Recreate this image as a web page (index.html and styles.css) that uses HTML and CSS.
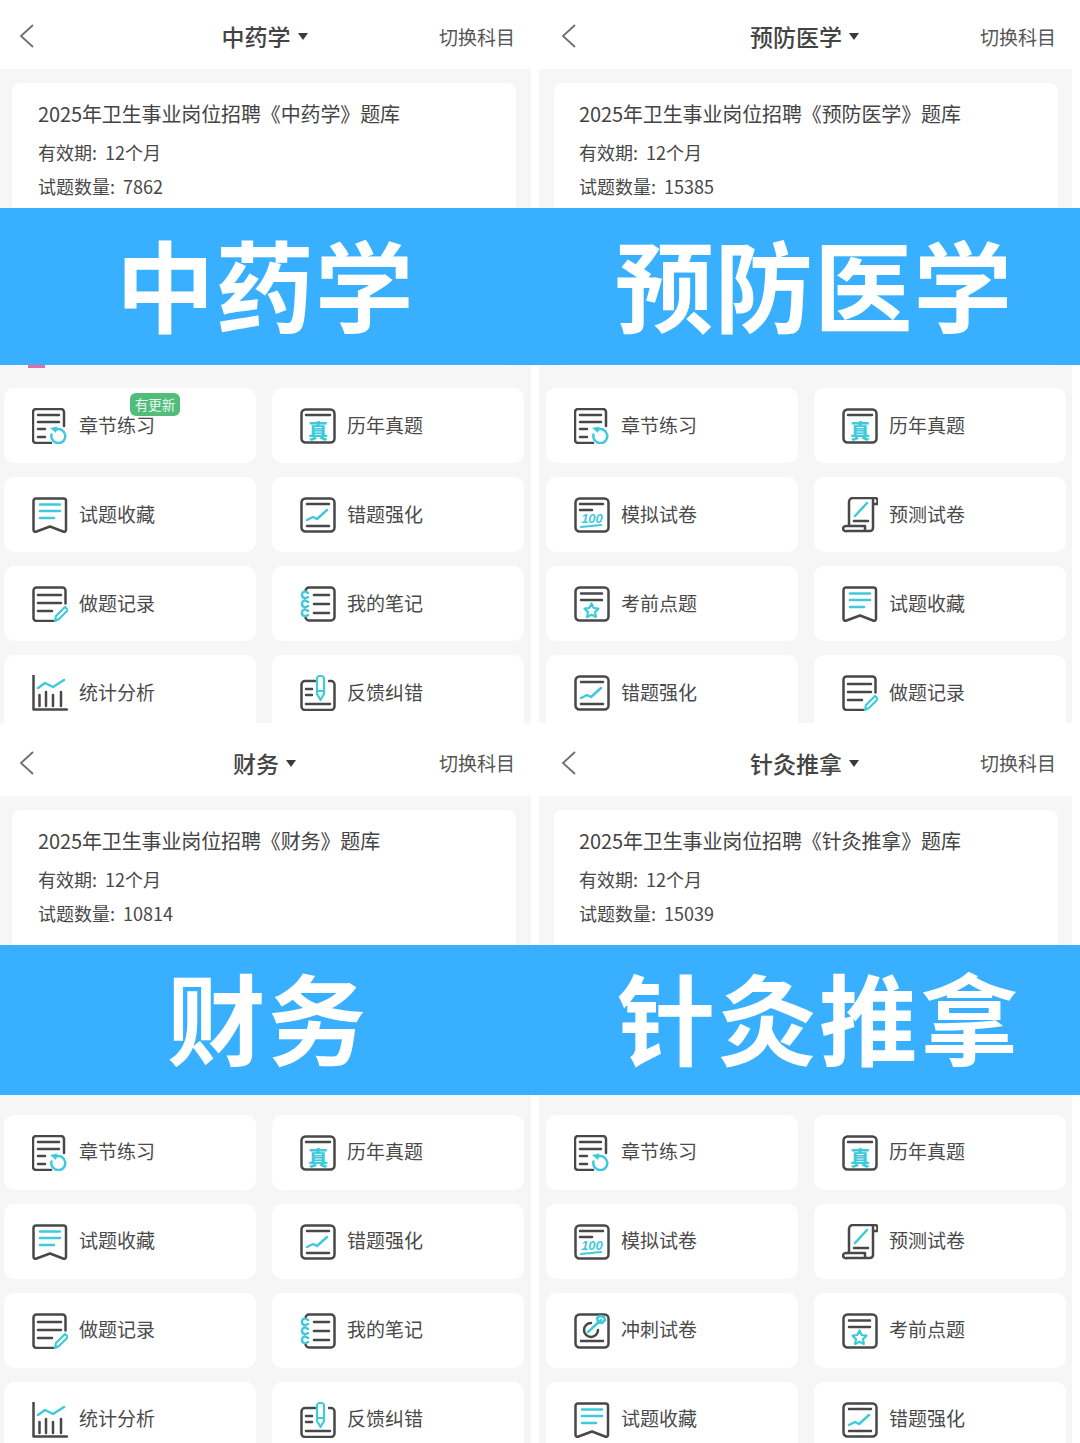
FILE: index.html
```html
<!DOCTYPE html>
<html lang="zh-CN">

<head>
    <meta charset="UTF-8">
    <meta name="viewport" content="width=device-width, initial-scale=1.0">
    <title>题库科目</title>
    <link rel="stylesheet" href="styles.css">
</head>

<body>
    <svg class="icon-defs" aria-hidden="true">
        <symbol id="i-chapter" viewBox="0 0 36 36">
            <path class="dk" d="M19 35H4a3 3 0 0 1-3-3V4a3 3 0 0 1 3-3h25a3 3 0 0 1 3 3v14"/>
            <path class="dk" d="M6 7h21M6 14h21M6 21h7M6 29h7"/>
            <path class="ac" d="M24 21.500a7 7 0 1 1-4.500 5"/>
            <path class="ac-fill" d="M18 20l7.500-1.500-1.500 6.500z"/>
        </symbol>
        <symbol id="i-fav" viewBox="0 0 36 36">
            <path class="dk" d="M4 1.500h27.500a2.500 2.500 0 0 1 2.500 2.500v29c0 1.500-1.500 2.200-3 1.500L18 29.500 4.500 34.500C3 35.200 1.500 34.500 1.500 33V4A2.500 2.500 0 0 1 4 1.500z"/>
            <path class="ac" d="M8 7.500h20M8 14h20M8 21h14"/>
        </symbol>
        <symbol id="i-record" viewBox="0 0 36 36">
            <path class="dk" d="M21 35H4.500a3 3 0 0 1-3-3V4.500a3 3 0 0 1 3-3h26a3 3 0 0 1 3 3v13"/>
            <path class="dk" d="M6 9h23M6 17h23M6 25h14"/>
            <path class="ac thin" d="M23 35l1-5 9-9 3 3-9 9z"/>
        </symbol>
        <symbol id="i-stats" viewBox="0 0 36 36">
            <path class="dk" d="M1.500 0v34.500H35M7.500 20v11M14 17v14M21 20v11M29 17v14"/>
            <path class="ac" d="M6 13l7-5 8 4 11-7"/>
        </symbol>
        <symbol id="i-real" viewBox="0 0 36 36">
            <rect class="dk" x="1.500" y="1.500" width="33" height="33" rx="4"/>
            <path class="dk" d="M6 7h24"/>
            <text class="glyph" x="18" y="31" text-anchor="middle">真</text>
        </symbol>
        <symbol id="i-wrong" viewBox="0 0 36 36">
            <rect class="dk" x="1.500" y="1.500" width="33" height="33" rx="4"/>
            <path class="dk" d="M7 7h22M7 29h22"/>
            <path class="ac" d="M7 23l6-3 4 2 10-9"/>
        </symbol>
        <symbol id="i-notes" viewBox="0 0 36 36">
            <path class="dk" d="M5.500 5a3.500 3.500 0 0 1 3.500-3.500h22a3.500 3.500 0 0 1 3.500 3.500v26a3.500 3.500 0 0 1-3.500 3.500H9A3.500 3.500 0 0 1 5.500 31"/>
            <path class="dk" d="M14 9h15M14 18h15M14 27h15"/>
            <path class="ac" d="M8 7C4 4 2 6 2 9s3 4 6 2M8 16c-4-3-6-1-6 2s3 4 6 2M8 25c-4-3-6-1-6 2s3 4 6 2"/>
        </symbol>
        <symbol id="i-feedback" viewBox="0 0 36 36">
            <path class="dk" d="M15 6H5a3.500 3.500 0 0 0-3.500 3.500v22A3.500 3.500 0 0 0 5 35h26a3.500 3.500 0 0 0 3.500-3.500v-22A3.500 3.500 0 0 0 31 6h-2"/>
            <path class="dk" d="M6 14h6M6 20h6M6 29h24"/>
            <path class="ac thin" d="M17 3a3 3 0 0 1 3-2h1a3 3 0 0 1 3 2v16l-3.500 6-3.500-6zM17 16h7"/>
        </symbol>
        <symbol id="i-mock" viewBox="0 0 36 36">
            <rect class="dk" x="1.500" y="1.500" width="33" height="33" rx="4"/>
            <path class="dk" d="M6 7h23M6 13h12"/>
            <text class="glyph-num" x="18" y="26" text-anchor="middle">100</text>
            <path class="ac thin" d="M7 30l20-2"/>
        </symbol>
        <symbol id="i-predict" viewBox="0 0 36 36">
            <path class="dk" d="M7 28V5a4 4 0 0 1 4-4h22a2.500 2.500 0 0 1 2.500 2.500V7H31M31 1.500V31a3 3 0 0 1-3 3H5a3 3 0 0 1-4-2.500A3 3 0 0 1 4 29h19v5"/>
            <path class="dk" d="M12 24h14"/>
            <path class="ac" d="M13 19L25 6"/>
        </symbol>
        <symbol id="i-key" viewBox="0 0 36 36">
            <rect class="dk" x="1.500" y="1.500" width="33" height="33" rx="4"/>
            <path class="dk" d="M7 7.500h21M7 14h21"/>
            <path class="ac thin" d="M17.500 17.500l2.200 4.500 4.800.700-3.500 3.400.900 4.900-4.400-2.300-4.400 2.300.900-4.900-3.500-3.400 4.800-.700z"/>
        </symbol>
        <symbol id="i-sprint" viewBox="0 0 36 36">
            <rect class="dk" x="1.500" y="1.500" width="33" height="33" rx="4"/>
            <path class="dk" d="M7 28h22M17 10a7 7 0 1 0 7 7"/>
            <path class="ac" d="M14 19L27 7M23 5l1 4 4 1 3-3-1-3-4-1z"/>
        </symbol>
    </svg>

    <div class="sheet">
        <section class="panel panel-top">
            <header class="topbar">
                <svg class="back" viewBox="0 0 16 24"><path d="M14 1L2 12l12 11"/></svg>
                <div class="subject">中药学<i class="caret"></i></div>
                <a class="switch">切换科目</a>
            </header>
            <div class="content">
                <div class="info-card">
                    <h2>2025年卫生事业岗位招聘《中药学》题库</h2>
                    <p>有效期: 12个月</p>
                    <p>试题数量: 7862</p>
                    <div class="promo-edge"></div>
                </div>
                <div class="tiles">
                    <div class="tile"><svg class="ico"><use href="#i-chapter"/></svg><span>章节练习</span><em class="badge">有更新</em></div>
                    <div class="tile"><svg class="ico"><use href="#i-real"/></svg><span>历年真题</span></div>
                    <div class="tile"><svg class="ico"><use href="#i-fav"/></svg><span>试题收藏</span></div>
                    <div class="tile"><svg class="ico"><use href="#i-wrong"/></svg><span>错题强化</span></div>
                    <div class="tile"><svg class="ico"><use href="#i-record"/></svg><span>做题记录</span></div>
                    <div class="tile"><svg class="ico"><use href="#i-notes"/></svg><span>我的笔记</span></div>
                    <div class="tile"><svg class="ico"><use href="#i-stats"/></svg><span>统计分析</span></div>
                    <div class="tile"><svg class="ico"><use href="#i-feedback"/></svg><span>反馈纠错</span></div>
                </div>
            </div>
        </section>

        <section class="panel panel-top panel-right">
            <header class="topbar">
                <svg class="back" viewBox="0 0 16 24"><path d="M14 1L2 12l12 11"/></svg>
                <div class="subject">预防医学<i class="caret"></i></div>
                <a class="switch">切换科目</a>
            </header>
            <div class="content">
                <div class="info-card">
                    <h2>2025年卫生事业岗位招聘《预防医学》题库</h2>
                    <p>有效期: 12个月</p>
                    <p>试题数量: 15385</p>
                </div>
                <div class="tiles">
                    <div class="tile"><svg class="ico"><use href="#i-chapter"/></svg><span>章节练习</span></div>
                    <div class="tile"><svg class="ico"><use href="#i-real"/></svg><span>历年真题</span></div>
                    <div class="tile"><svg class="ico"><use href="#i-mock"/></svg><span>模拟试卷</span></div>
                    <div class="tile"><svg class="ico"><use href="#i-predict"/></svg><span>预测试卷</span></div>
                    <div class="tile"><svg class="ico"><use href="#i-key"/></svg><span>考前点题</span></div>
                    <div class="tile"><svg class="ico"><use href="#i-fav"/></svg><span>试题收藏</span></div>
                    <div class="tile"><svg class="ico"><use href="#i-wrong"/></svg><span>错题强化</span></div>
                    <div class="tile"><svg class="ico"><use href="#i-record"/></svg><span>做题记录</span></div>
                </div>
            </div>
        </section>

        <section class="panel panel-bottom">
            <header class="topbar">
                <svg class="back" viewBox="0 0 16 24"><path d="M14 1L2 12l12 11"/></svg>
                <div class="subject">财务<i class="caret"></i></div>
                <a class="switch">切换科目</a>
            </header>
            <div class="content">
                <div class="info-card">
                    <h2>2025年卫生事业岗位招聘《财务》题库</h2>
                    <p>有效期: 12个月</p>
                    <p>试题数量: 10814</p>
                </div>
                <div class="tiles">
                    <div class="tile"><svg class="ico"><use href="#i-chapter"/></svg><span>章节练习</span></div>
                    <div class="tile"><svg class="ico"><use href="#i-real"/></svg><span>历年真题</span></div>
                    <div class="tile"><svg class="ico"><use href="#i-fav"/></svg><span>试题收藏</span></div>
                    <div class="tile"><svg class="ico"><use href="#i-wrong"/></svg><span>错题强化</span></div>
                    <div class="tile"><svg class="ico"><use href="#i-record"/></svg><span>做题记录</span></div>
                    <div class="tile"><svg class="ico"><use href="#i-notes"/></svg><span>我的笔记</span></div>
                    <div class="tile"><svg class="ico"><use href="#i-stats"/></svg><span>统计分析</span></div>
                    <div class="tile"><svg class="ico"><use href="#i-feedback"/></svg><span>反馈纠错</span></div>
                </div>
            </div>
        </section>

        <section class="panel panel-bottom panel-right">
            <header class="topbar">
                <svg class="back" viewBox="0 0 16 24"><path d="M14 1L2 12l12 11"/></svg>
                <div class="subject">针灸推拿<i class="caret"></i></div>
                <a class="switch">切换科目</a>
            </header>
            <div class="content">
                <div class="info-card">
                    <h2>2025年卫生事业岗位招聘《针灸推拿》题库</h2>
                    <p>有效期: 12个月</p>
                    <p>试题数量: 15039</p>
                </div>
                <div class="tiles">
                    <div class="tile"><svg class="ico"><use href="#i-chapter"/></svg><span>章节练习</span></div>
                    <div class="tile"><svg class="ico"><use href="#i-real"/></svg><span>历年真题</span></div>
                    <div class="tile"><svg class="ico"><use href="#i-mock"/></svg><span>模拟试卷</span></div>
                    <div class="tile"><svg class="ico"><use href="#i-predict"/></svg><span>预测试卷</span></div>
                    <div class="tile"><svg class="ico"><use href="#i-sprint"/></svg><span>冲刺试卷</span></div>
                    <div class="tile"><svg class="ico"><use href="#i-key"/></svg><span>考前点题</span></div>
                    <div class="tile"><svg class="ico"><use href="#i-fav"/></svg><span>试题收藏</span></div>
                    <div class="tile"><svg class="ico"><use href="#i-wrong"/></svg><span>错题强化</span></div>
                </div>
            </div>
        </section>

        <!-- big labels lying over the panels -->
        <div class="banner banner-top">
            <span class="label label-a">中药学</span>
            <span class="label label-b">预防医学</span>
        </div>
        <div class="banner banner-bottom">
            <span class="label label-c">财务</span>
            <span class="label label-d">针灸推拿</span>
        </div>
    </div>
</body>

</html>
```

FILE: styles.css
```css
body {
    font-family: "Noto Sans CJK SC", "Noto Sans", sans-serif;
    margin: 0;
    padding: 0;
    background-color: #fff;
    color: #444;
    overflow: hidden;
}

.icon-defs {
    display: none;
}

.sheet {
    position: relative;
    display: grid;
    grid-template-columns: 539px 541px;
    grid-template-rows: 723px 720px;
    height: 1443px;
}

.panel {
    width: 531px;
    overflow: hidden;
}

.panel-right {
    width: 533px;
}

/* top bar */
.topbar {
    display: grid;
    grid-template-columns: 1fr auto 1fr;
    align-items: center;
    box-sizing: border-box;
    height: 73px;
    padding: 6px 16px 0 16px;
    background-color: #fff;
}

.panel-top .topbar {
    height: 69px;
    padding-top: 3px;
}

.back {
    width: 16px;
    height: 24px;
    margin-left: 3px;
}

.panel-right .back {
    margin-left: 6px;
}

.back path {
    fill: none;
    stroke: #6e6e6e;
    stroke-width: 1.800;
}

.subject {
    display: flex;
    align-items: center;
    margin-left: -2px;
    font-size: 23px;
    line-height: 32px;
    font-weight: 500;
    color: #444;
}

.caret {
    width: 0;
    height: 0;
    margin-left: 7px;
    margin-top: 1px;
    border-left: 5.500px solid transparent;
    border-right: 5.500px solid transparent;
    border-top: 7px solid #3a3a3a;
}

.switch {
    justify-self: end;
    font-size: 19px;
    color: #555;
}

/* body of a panel */
.content {
    height: 100%;
    padding: 14px 0 0 0;
    background-color: #f6f6f6;
}

.info-card {
    display: flex;
    flex-direction: column;
    box-sizing: border-box;
    height: 283px;
    width: 504px;
    margin-left: 12px;
    padding: 15px 0 0 26px;
    background-color: #fff;
    border-radius: 8px;
}

.panel-right .info-card {
    margin-left: 15px;
    padding-left: 25px;
}

.info-card h2 {
    margin: 0 0 6px 0;
    font-size: 20px;
    line-height: 32px;
    font-weight: 400;
    letter-spacing: -0.120px;
    color: #444;
}

.info-card p {
    margin: 0;
    font-size: 18px;
    line-height: 33.500px;
    word-spacing: 4px;
    color: #484848;
}

.promo-edge {
    width: 17px;
    height: 3px;
    margin-top: auto;
    margin-left: -10px;
    margin-bottom: -2px;
    background-color: #e86aa8;
}

/* function tiles */
.tiles {
    display: grid;
    grid-template-columns: 252px 252px;
    grid-auto-rows: 75px;
    column-gap: 16px;
    row-gap: 14px;
    margin-top: 22px;
    padding-left: 4px;
}

.panel-right .tiles {
    padding-left: 7px;
}

.tile {
    position: relative;
    display: flex;
    align-items: center;
    gap: 11px;
    padding-left: 28px;
    background-color: #fff;
    border-radius: 10px;
    font-size: 19px;
    color: #4a4a4a;
}

.tile span {
    margin-bottom: 2px;
}

.panel-bottom .tile span {
    margin-bottom: 4px;
}

.ico {
    width: 36px;
    height: 36px;
    flex-shrink: 0;
}

.dk,
.ac {
    fill: none;
    stroke-width: 2.500;
    stroke-linecap: round;
    stroke-linejoin: round;
}

.dk {
    stroke: #484848;
}

.ac {
    stroke: #3fcadb;
}

.ac-fill {
    fill: #3fcadb;
}

.ac.thin {
    stroke-width: 2.200;
}

.glyph {
    font-size: 20px;
    font-weight: 900;
    fill: #3fcadb;
}

.glyph-num {
    font-family: "Liberation Sans", sans-serif;
    font-size: 13px;
    font-style: italic;
    font-weight: 700;
    fill: #3fcadb;
}

.badge {
    position: absolute;
    top: 5px;
    left: 126px;
    width: 50px;
    height: 23px;
    border-radius: 6px;
    background-color: #52bd7b;
    color: #e9f7ee;
    font-size: 13.500px;
    font-style: normal;
    line-height: 23px;
    text-align: center;
}

/* banners */
.banner {
    position: absolute;
    left: 0;
    right: 0;
    background-color: #38b0ff;
    color: #fff;
}

.banner-top {
    top: 208px;
    height: 157px;
}

.banner-bottom {
    top: 945px;
    height: 150px;
}

.label {
    position: absolute;
    top: 50%;
    font-size: 98.500px;
    font-weight: 700;
    line-height: 1;
    letter-spacing: 1px;
    white-space: nowrap;
    transform: translateY(-55%);
}

.label-a {
    left: 116px;
}

.label-b {
    left: 615px;
}

.label-c {
    left: 167px;
    letter-spacing: 2px;
}

.label-d {
    left: 617px;
    letter-spacing: 2.500px;
}
```
